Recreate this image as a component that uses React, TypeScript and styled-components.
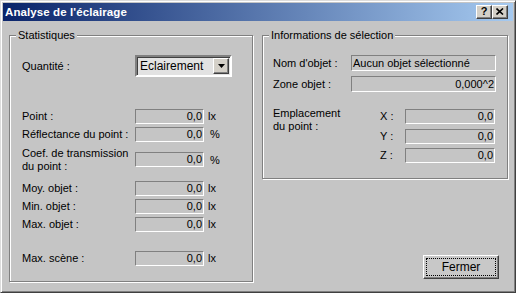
import React from 'react';
import styled, { createGlobalStyle } from 'styled-components';

const GlobalStyle = createGlobalStyle`
  html, body {
    margin: 0;
    padding: 0;
    background: #c5c5c5;
  }
  body {
    font-family: "Liberation Sans", Arial, sans-serif;
    font-size: 11px;
    color: #000;
  }
  * {
    box-sizing: border-box;
  }
`;

const Window = styled.div`
  width: 516px;
  height: 293px;
  background: #c5c5c5;
  border: 1px solid;
  border-color: #dcdcdc #404040 #404040 #dcdcdc;
  box-shadow: inset 1px 1px 0 #fff, inset -1px -1px 0 #808080;
  padding: 2px;
  display: flex;
  flex-direction: column;
`;

const TitleBar = styled.div`
  height: 18px;
  flex: none;
  background: linear-gradient(to right, #0a246a, #a6caf0);
  display: flex;
  align-items: center;
  justify-content: space-between;
  padding: 0 5px 0 2px;
`;

const Title = styled.span`
  color: #fff;
  font-weight: bold;
  font-size: 11.5px;
  letter-spacing: 0.1px;
`;

const CaptionButtons = styled.div`
  display: flex;
`;

const CaptionButton = styled.div`
  width: 16px;
  height: 14px;
  background: #d4d0c8;
  border: 1px solid;
  border-color: #fff #404040 #404040 #fff;
  box-shadow: inset -1px -1px 0 #808080;
  display: flex;
  align-items: center;
  justify-content: center;
  font-weight: bold;
  font-size: 11px;
  line-height: 1;
  padding-bottom: 1px;
`;

const Body = styled.div`
  flex: 1;
  display: grid;
  grid-template-columns: 244px 246px;
  column-gap: 9px;
  padding: 8px 6px 8px 6px;
`;

const Group = styled.fieldset<{ $h: number }>`
  margin: 0;
  padding: 0;
  min-width: 0;
  height: ${p => p.$h}px;
  border: 1px solid #808080;
  box-shadow: inset 1px 1px 0 #fff, 1px 1px 0 #fff;
`;

const GroupTitle = styled.legend`
  margin-left: 6px;
  padding: 0 2px;
  line-height: 13px;
  background: #c5c5c5;
`;

const Stats = styled.div`
  display: flex;
  flex-direction: column;
  padding: 13px 0 0 12px;
`;

const Row = styled.div<{ $h: number; $mt?: number }>`
  display: flex;
  align-items: center;
  height: ${p => p.$h}px;
  margin-top: ${p => p.$mt ?? 0}px;
`;

const Label = styled.div<{ $w: number }>`
  width: ${p => p.$w}px;
  flex: none;
  line-height: 13px;
`;

const Field = styled.div<{ $w: number; $h?: number; $left?: boolean }>`
  width: ${p => p.$w}px;
  height: ${p => p.$h ?? 15}px;
  flex: none;
  border: 1px solid;
  border-color: #808080 #fff #fff #808080;
  display: flex;
  align-items: center;
  justify-content: ${p => (p.$left ? 'flex-start' : 'flex-end')};
  padding: 0 1px;
  white-space: nowrap;
  line-height: 1;
`;

const Unit = styled.span<{ $pct?: boolean }>`
  margin-left: ${p => (p.$pct ? 6 : 4)}px;
`;

const Select = styled.div`
  width: 97px;
  height: 22px;
  border: 2px solid;
  border-color: #808080 #fff #fff #808080;
  box-shadow: inset 1px 1px 0 #404040;
  background: #e2e2e2;
  display: flex;
  align-items: center;
  justify-content: space-between;
  padding: 0 1px 0 3px;
  font-size: 12px;
`;

const SelectArrow = styled.div`
  width: 16px;
  height: 16px;
  background: #d4d0c8;
  border: 1px solid;
  border-color: #fff #404040 #404040 #fff;
  box-shadow: inset -1px -1px 0 #808080;
  display: flex;
  align-items: center;
  justify-content: center;
`;

const RightColumn = styled.div`
  display: flex;
  flex-direction: column;
`;

const Selection = styled.div`
  display: flex;
  flex-direction: column;
  padding: 13px 0 0 10px;
`;

const Location = styled.div`
  display: flex;
  margin-top: 15px;
`;

const Coords = styled.div`
  display: flex;
  flex-direction: column;
`;

const CoordRow = styled.div`
  display: flex;
  align-items: center;
  height: 19.5px;
`;

const Footer = styled.div`
  margin-top: auto;
  display: flex;
  justify-content: flex-end;
  padding: 0 9px 3px 0;
`;

const Button = styled.button`
  width: 76px;
  height: 24px;
  background: #c8c8c8;
  border: 1px solid;
  border-color: #fff #404040 #404040 #fff;
  box-shadow: inset -1px -1px 0 #808080;
  padding: 3px;
  font: inherit;
  font-size: 12px;
  color: #000;
`;

const FocusRing = styled.span`
  display: flex;
  align-items: center;
  justify-content: center;
  height: 100%;
  outline: 1px dotted #000;
`;

const stats = [
  { label: 'Point :', unit: 'lx', h: 18, mt: 30 },
  { label: 'Réflectance du point :', unit: '%', h: 18 },
  { label: 'Coef. de transmission du point :', unit: '%', h: 33 },
  { label: 'Moy. objet :', unit: 'lx', h: 18, mt: 3 },
  { label: 'Min. objet :', unit: 'lx', h: 18 },
  { label: 'Max. objet :', unit: 'lx', h: 18 },
  { label: 'Max. scène :', unit: 'lx', h: 18, mt: 16 },
];

const App: React.FC = () => {
  return (
    <>
      <GlobalStyle />
      <Window>
        <TitleBar>
          <Title>Analyse de l'éclairage</Title>
          <CaptionButtons>
            <CaptionButton>?</CaptionButton>
            <CaptionButton>
              <svg width="8" height="7" viewBox="0 0 8 7">
                <path d="M0.5 0.5 L7 6.5 M7 0.5 L0.5 6.5" stroke="#000" strokeWidth="1.6" />
              </svg>
            </CaptionButton>
          </CaptionButtons>
        </TitleBar>

        <Body>
          <Group $h={253}>
            <GroupTitle>Statistiques</GroupTitle>
            <Stats>
              <Row $h={22}>
                <Label $w={113}>Quantité :</Label>
                <Select>
                  <span>Eclairement</span>
                  <SelectArrow>
                    <svg width="7" height="4" viewBox="0 0 7 4">
                      <path d="M0 0 H7 L3.5 4 Z" fill="#000" />
                    </svg>
                  </SelectArrow>
                </Select>
              </Row>
              {stats.map((s, i) => (
                <Row key={i} $h={s.h} $mt={s.mt}>
                  <Label $w={113}>{s.label}</Label>
                  <Field $w={69}>0,0</Field>
                  <Unit $pct={s.unit === '%'}>{s.unit}</Unit>
                </Row>
              ))}
            </Stats>
          </Group>

          <RightColumn>
            <Group $h={150}>
              <GroupTitle>Informations de sélection</GroupTitle>
              <Selection>
                <Row $h={16}>
                  <Label $w={78}>Nom d'objet :</Label>
                  <Field $w={145} $h={16} $left>Aucun objet sélectionné</Field>
                </Row>
                <Row $h={16} $mt={5}>
                  <Label $w={78}>Zone objet :</Label>
                  <Field $w={145} $h={16}>0,000^2</Field>
                </Row>
                <Location>
                  <Label $w={107}>
                    Emplacement
                    <br />
                    du point :
                  </Label>
                  <Coords>
                    {['X', 'Y', 'Z'].map(axis => (
                      <CoordRow key={axis}>
                        <Label $w={25}>{axis} :</Label>
                        <Field $w={90}>0,0</Field>
                      </CoordRow>
                    ))}
                  </Coords>
                </Location>
              </Selection>
            </Group>
            <Footer>
              <Button>
                <FocusRing>Fermer</FocusRing>
              </Button>
            </Footer>
          </RightColumn>
        </Body>
      </Window>
    </>
  );
};

export default App;
